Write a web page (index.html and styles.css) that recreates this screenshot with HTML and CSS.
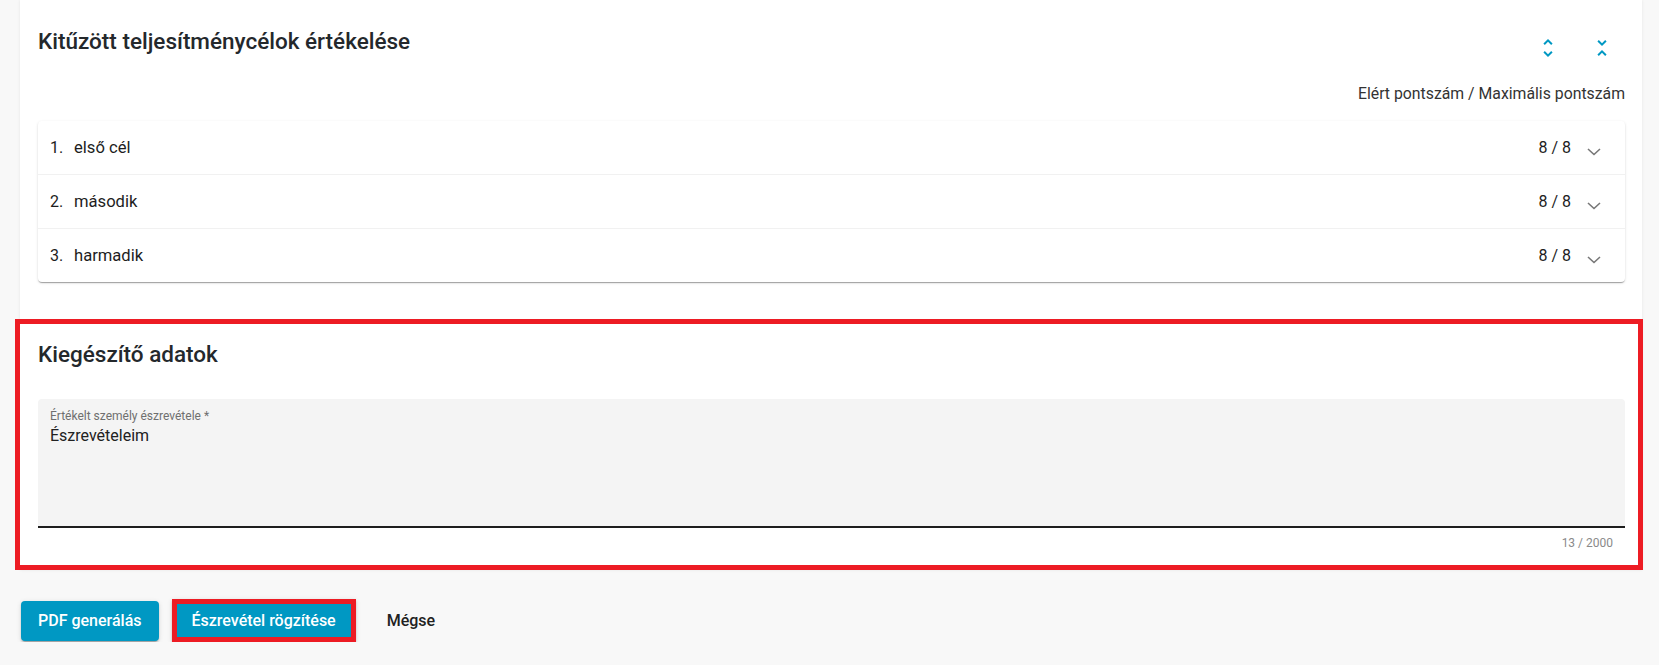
FILE: index.html
```html
<!DOCTYPE html>
<html>
<head>
	<title>Teljesítményértékelés</title>
	<link rel="stylesheet" href="styles.css">
</head>
<body>
	<div class="card">
		<section class="goals">
			<div class="goals-head">
				<h2 class="section-title">Kitűzött teljesítménycélok értékelése</h2>
				<div class="head-actions">
					<button class="icon-btn" title="Összes kinyitása">
						<svg viewBox="0 0 24 24" width="24" height="24"><path d="M12 5.83L15.17 9l1.41-1.41L12 3 7.41 7.590 8.83 9 12 5.83zm0 12.34L8.83 15l-1.41 1.41L12 21l4.59-4.59L15.17 15 12 18.17z"/></svg>
					</button>
					<button class="icon-btn" title="Összes becsukása">
						<svg viewBox="0 0 24 24" width="24" height="24"><path d="M7.41 18.59L8.83 20 12 16.83 15.17 20l1.41-1.41L12 14l-4.59 4.59zm9.18-13.18L15.17 4 12 7.17 8.83 4 7.41 5.41 12 10l4.59-4.59z"/></svg>
					</button>
				</div>
			</div>
			<div class="score-caption">Elért pontszám / Maximális pontszám</div>
			<div class="panels">
				<div class="panel">
					<span class="panel-num">1.</span>
					<span class="panel-name">első cél</span>
					<span class="panel-score">8 / 8</span>
					<svg class="chevron" viewBox="0 0 14 8" width="14" height="8"><path d="M1 1l6 5.5L13 1"/></svg>
				</div>
				<div class="panel">
					<span class="panel-num">2.</span>
					<span class="panel-name">második</span>
					<span class="panel-score">8 / 8</span>
					<svg class="chevron" viewBox="0 0 14 8" width="14" height="8"><path d="M1 1l6 5.5L13 1"/></svg>
				</div>
				<div class="panel">
					<span class="panel-num">3.</span>
					<span class="panel-name">harmadik</span>
					<span class="panel-score">8 / 8</span>
					<svg class="chevron" viewBox="0 0 14 8" width="14" height="8"><path d="M1 1l6 5.5L13 1"/></svg>
				</div>
			</div>
		</section>

		<section class="extra highlight">
			<h2 class="section-title">Kiegészítő adatok</h2>
			<div class="field">
				<label class="field-label">Értékelt személy észrevétele *</label>
				<div class="field-value">Észrevételeim</div>
			</div>
			<div class="field-hint">13 / 2000</div>
		</section>
	</div>

	<div class="actions">
		<button class="btn btn-primary">PDF generálás</button>
		<button class="btn btn-primary highlight">Észrevétel rögzítése</button>
		<button class="btn btn-text">Mégse</button>
	</div>
</body>
</html>
```

FILE: styles.css
```css
html {
	background-color: #f8f8f8;
}

body {
	margin: 0;
	font-family: Roboto, "Noto Sans", Arial, sans-serif;
	color: #212121;
	background-color: #f8f8f8;
}

.card {
	margin-left: 20px;
	width: 1622px;
	background-color: #fff;
	box-shadow: 0 0 3px rgba(0, 0, 0, 0.08);
}

.section-title {
	margin: 0;
	font-size: 22.5px;
	line-height: 32px;
	font-weight: 500;
	color: #24282c;
}

.goals {
	padding: 25px 17px 37px 18px;
}

.goals-head {
	display: flex;
	justify-content: space-between;
	align-items: flex-start;
}

.head-actions {
	display: flex;
	gap: 14px;
	margin-top: 3px;
	margin-right: 3px;
}

.icon-btn {
	width: 40px;
	height: 40px;
	padding: 0;
	border: none;
	background: none;
	display: flex;
	align-items: center;
	justify-content: center;
	cursor: pointer;
}

.icon-btn svg {
	fill: #0098c3;
}

.score-caption {
	margin-top: 14px;
	text-align: right;
	font-size: 15.8px;
	line-height: 24px;
	color: #333;
}

.panels {
	margin-top: 15px;
	border-radius: 4px;
	background-color: #fff;
	box-shadow: 0 2px 1px -1px rgba(0, 0, 0, 0.2), 0 1px 1px 0 rgba(0, 0, 0, 0.14), 0 1px 3px 0 rgba(0, 0, 0, 0.12);
}

.panel {
	display: flex;
	align-items: center;
	height: 53px;
	padding: 0 24px 0 12px;
	font-size: 16px;
	color: #1d1d1d;
	border-bottom: 1px solid #f1f1f1;
}

.panel:last-child {
	border-bottom: none;
}

.panel-num {
	width: 24px;
}

.panel-name {
	flex: 1;
	font-size: 16.6px;
}

.panel-score {
	margin-right: 16px;
}

.chevron {
	margin-top: 8px;
	fill: none;
	stroke: #777;
	stroke-width: 1.6;
}

.extra {
	box-sizing: border-box;
	margin-left: -5px;
	width: 1628px;
	padding: 14px 13px 14px 18px;
}

.highlight {
	border: 5px solid #ed1c24;
}

.field {
	margin-top: 29px;
	box-sizing: border-box;
	height: 129px;
	padding: 9px 12px 0;
	background-color: #f4f4f4;
	border-radius: 4px 4px 0 0;
	border-bottom: 2px solid #1e1e1e;
}

.field-label {
	display: block;
	font-size: 12px;
	line-height: 16px;
	color: #6f6f6f;
}

.field-value {
	margin-top: 2px;
	font-size: 16px;
	line-height: 20px;
	color: #212121;
}

.field-hint {
	margin-top: 7px;
	padding-right: 12px;
	text-align: right;
	font-size: 12px;
	line-height: 16px;
	color: #8a8a8a;
}

.actions {
	display: flex;
	align-items: center;
	padding: 29px 0 0 21px;
}

.btn {
	box-sizing: border-box;
	height: 40px;
	padding: 0 17px;
	border: none;
	border-radius: 4px;
	font-family: Roboto, Arial, sans-serif;
	font-size: 16px;
	font-weight: 500;
	cursor: pointer;
}

.btn-primary {
	color: #fff;
	background-color: #0098c3;
	box-shadow: 0 3px 1px -2px rgba(0, 0, 0, 0.2), 0 2px 2px 0 rgba(0, 0, 0, 0.14), 0 1px 5px 0 rgba(0, 0, 0, 0.12);
}

.btn-primary + .btn-primary {
	margin-left: 13px;
}

.btn-primary.highlight {
	height: 43px;
	padding: 0 15px;
	border: 5px solid #ed1c24;
	border-radius: 0;
}

.btn-text {
	margin-left: 15px;
	padding: 0 16px;
	color: #212121;
	background: none;
}
```
